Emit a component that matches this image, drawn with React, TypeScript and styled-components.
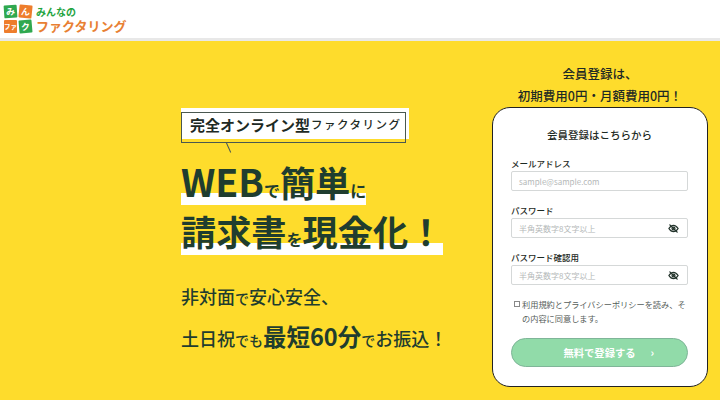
import { createGlobalStyle, styled } from "styled-components";

const GlobalStyle = createGlobalStyle`
    html, body {
        margin: 0;
        padding: 0;
        width: 720px;
        height: 400px;
        overflow: hidden;
        font-family: "Noto Sans CJK JP", "Noto Sans", sans-serif;
        color: #1e2a24;
    }
`;

const EyeOff = () => (
    <svg width="11" height="11" viewBox="0 0 24 24" fill="none" stroke="#22332b" strokeWidth="2.8" strokeLinecap="round">
        <path d="M2 12c3-5 6.5-7 10-7s7 2 10 7c-3 5-6.5 7-10 7s-7-2-10-7z" />
        <circle cx="12" cy="12" r="3.2" />
        <path d="M4 4l16 16" />
    </svg>
);

const Field = ({ label, placeholder, secret }: { label: string; placeholder: string; secret?: boolean }) => (
    <FieldWrap>
        <FieldLabel>{label}</FieldLabel>
        <InputBox>
            <Placeholder>{placeholder}</Placeholder>
            {secret && <EyeOff />}
        </InputBox>
    </FieldWrap>
);

const App = () => (
    <Page>
        <GlobalStyle />
        <Header>
            <LogoTiles>
                <Tile $bg="#2fa84f" $tilt={-4}>み</Tile>
                <Tile $bg="#ee7d2c" $tilt={6}>ん</Tile>
                <Tile $bg="#ee7d2c" $tilt={0} $narrow>ファ</Tile>
                <Tile $bg="#2fa84f" $tilt={-5}>ク</Tile>
            </LogoTiles>
            <LogoText>
                <LogoSmall>みんなの</LogoSmall>
                <LogoLarge>ファクタリング</LogoLarge>
            </LogoText>
        </Header>
        <Main>
            <Hero>
                <Badge>
                    完全オンライン型<BadgeSmall>ファクタリング</BadgeSmall>
                </Badge>
                <HeadLine $first>
                    <Latin>WEB</Latin><Small>で</Small>簡単<Small>に</Small>
                </HeadLine>
                <HeadLine>
                    請求書<Small>を</Small>現金化！
                </HeadLine>
                <SubLine>
                    非対面<SubSmall>で</SubSmall>安心安全、
                </SubLine>
                <SubLine>
                    土日祝<SubSmall>でも</SubSmall><SubBig>最短60分</SubBig><SubSmall>で</SubSmall>お振込！
                </SubLine>
            </Hero>
            <Side>
                <SideTitle>
                    会員登録は、<br />
                    初期費用0円・月額費用0円！
                </SideTitle>
                <Card>
                    <CardTitle>会員登録はこちらから</CardTitle>
                    <Field label="メールアドレス" placeholder="sample@sample.com" />
                    <Field label="パスワード" placeholder="半角英数字8文字以上" secret />
                    <Field label="パスワード確認用" placeholder="半角英数字8文字以上" secret />
                    <Agree>
                        <CheckMark />利用規約とプライバシーポリシーを読み、その内容に同意します。
                    </Agree>
                    <Submit>
                        無料で登録する
                        <Chevron>›</Chevron>
                    </Submit>
                </Card>
            </Side>
        </Main>
    </Page>
);

const Page = styled.div`
    width: 720px;
    height: 400px;
    display: flex;
    flex-direction: column;
    background: #fedc2c;
    overflow: hidden;
`;

const Header = styled.header`
    height: 38px;
    flex: none;
    display: flex;
    align-items: center;
    gap: 4px;
    padding-left: 4px;
    background: #fff;
    border-bottom: 3px solid #e8e8e8;
`;

const LogoTiles = styled.div`
    display: grid;
    grid-template-columns: 13px 13px;
    grid-auto-rows: 13px;
    gap: 2px;
`;

const Tile = styled.div<{ $bg: string; $tilt: number; $narrow?: boolean }>`
    display: flex;
    align-items: center;
    justify-content: center;
    background: ${p => p.$bg};
    transform: rotate(${p => p.$tilt}deg);
    border-radius: 1px;
    color: #fff;
    font-size: ${p => (p.$narrow ? "6.5px" : "9px")};
    line-height: 13px;
    font-weight: 700;
    white-space: nowrap;
`;

const LogoText = styled.div`
    display: flex;
    flex-direction: column;
    font-weight: 700;
`;

const LogoSmall = styled.div`
    font-size: 10px;
    line-height: 13px;
    color: #1fa43f;
`;

const LogoLarge = styled.div`
    font-size: 13px;
    line-height: 16px;
    color: #e87f33;
`;

const Main = styled.main`
    flex: 1;
    display: flex;
    justify-content: space-between;
    padding: 22px 12px 13px 181px;
`;

const Hero = styled.section`
    display: flex;
    flex-direction: column;
    align-items: flex-start;
    padding-top: 45px;
`;

const Badge = styled.div`
    position: relative;
    width: 220px;
    height: 31px;
    margin-bottom: 22px;
    padding: 1px 0 0 9px;
    box-sizing: border-box;
    display: flex;
    align-items: center;
    background: #fff;
    font-size: 15px;
    font-weight: 700;
    white-space: nowrap;
    box-shadow: 8px 0 0 #fff;

    &::before {
        content: "";
        position: absolute;
        left: 0;
        top: 4px;
        width: 225px;
        height: 31px;
        box-sizing: border-box;
        border: 1px solid #4a5850;
    }

    &::after {
        content: "";
        position: absolute;
        left: 47px;
        top: 34px;
        width: 1px;
        height: 11px;
        background: #4a5850;
        transform: rotate(-24deg);
    }
`;

const BadgeSmall = styled.span`
    font-size: 11.5px;
    font-weight: 500;
    letter-spacing: 1.5px;
    margin-left: 1px;
`;

const HeadLine = styled.h1<{ $first?: boolean }>`
    margin: 0 0 ${p => (p.$first ? "6px" : "26px")};
    height: 44px;
    display: flex;
    align-items: baseline;
    font-size: 35.2px;
    line-height: 40px;
    font-weight: 700;
    color: #1f3d2f;
    white-space: nowrap;
    background: linear-gradient(#fff, #fff) no-repeat left bottom / 100% 12px;
`;

const Latin = styled.span`
    font-size: 37.5px;
`;

const Small = styled.span`
    font-size: 16px;
`;

const SubLine = styled.p`
    margin: 0;
    height: 40px;
    display: flex;
    align-items: baseline;
    font-size: 18px;
    line-height: 30px;
    font-weight: 500;
    color: #1f3d2f;
    white-space: nowrap;
`;

const SubSmall = styled.span`
    font-size: 14px;
`;

const SubBig = styled.span`
    font-size: 23.5px;
    font-weight: 700;
`;

const Side = styled.aside`
    width: 216px;
    display: flex;
    flex-direction: column;
    align-items: center;
`;

const SideTitle = styled.div`
    height: 44px;
    flex: none;
    text-align: center;
    font-size: 12.5px;
    line-height: 22px;
    font-weight: 500;
    white-space: nowrap;
`;

const Card = styled.div`
    width: 216px;
    height: 280px;
    box-sizing: border-box;
    padding: 19px 19px 0 18px;
    display: flex;
    flex-direction: column;
    background: #fff;
    border: 1px solid #222;
    border-radius: 18px;
`;

const CardTitle = styled.div`
    text-align: center;
    font-size: 10.5px;
    line-height: 16px;
    font-weight: 500;
    margin-bottom: 14px;
`;

const FieldWrap = styled.div`
    margin-bottom: 13px;
`;

const FieldLabel = styled.div`
    font-size: 8.5px;
    line-height: 12px;
    font-weight: 500;
    margin-bottom: 2px;
`;

const InputBox = styled.div`
    height: 20px;
    box-sizing: border-box;
    display: flex;
    align-items: center;
    justify-content: space-between;
    padding: 0 8px 0 7px;
    border: 1px solid #d5d8d8;
    border-radius: 2px;
`;

const Placeholder = styled.span`
    font-size: 8px;
    color: #b4b8b8;
`;

const Agree = styled.div`
    position: relative;
    padding: 0 0 0 11px;
    margin: -1px 0 13px;
    width: 166px;
    font-size: 8.2px;
    line-height: 14px;
    color: #555d59;
    font-weight: 400;
`;

const CheckMark = styled.span`
    position: absolute;
    left: 3px;
    top: 4px;
    width: 6px;
    height: 6px;
    box-sizing: border-box;
    border: 1px solid #888;
`;

const Submit = styled.button`
    position: relative;
    width: 177px;
    height: 29px;
    flex: none;
    border: 1px solid #7fb598;
    border-radius: 15px;
    background: #91dba9;
    color: #fff;
    font-family: inherit;
    font-size: 10.3px;
    font-weight: 700;
    padding: 0;
`;

const Chevron = styled.span`
    position: absolute;
    right: 33px;
    top: 5px;
    font-size: 11px;
`;

export default App;
